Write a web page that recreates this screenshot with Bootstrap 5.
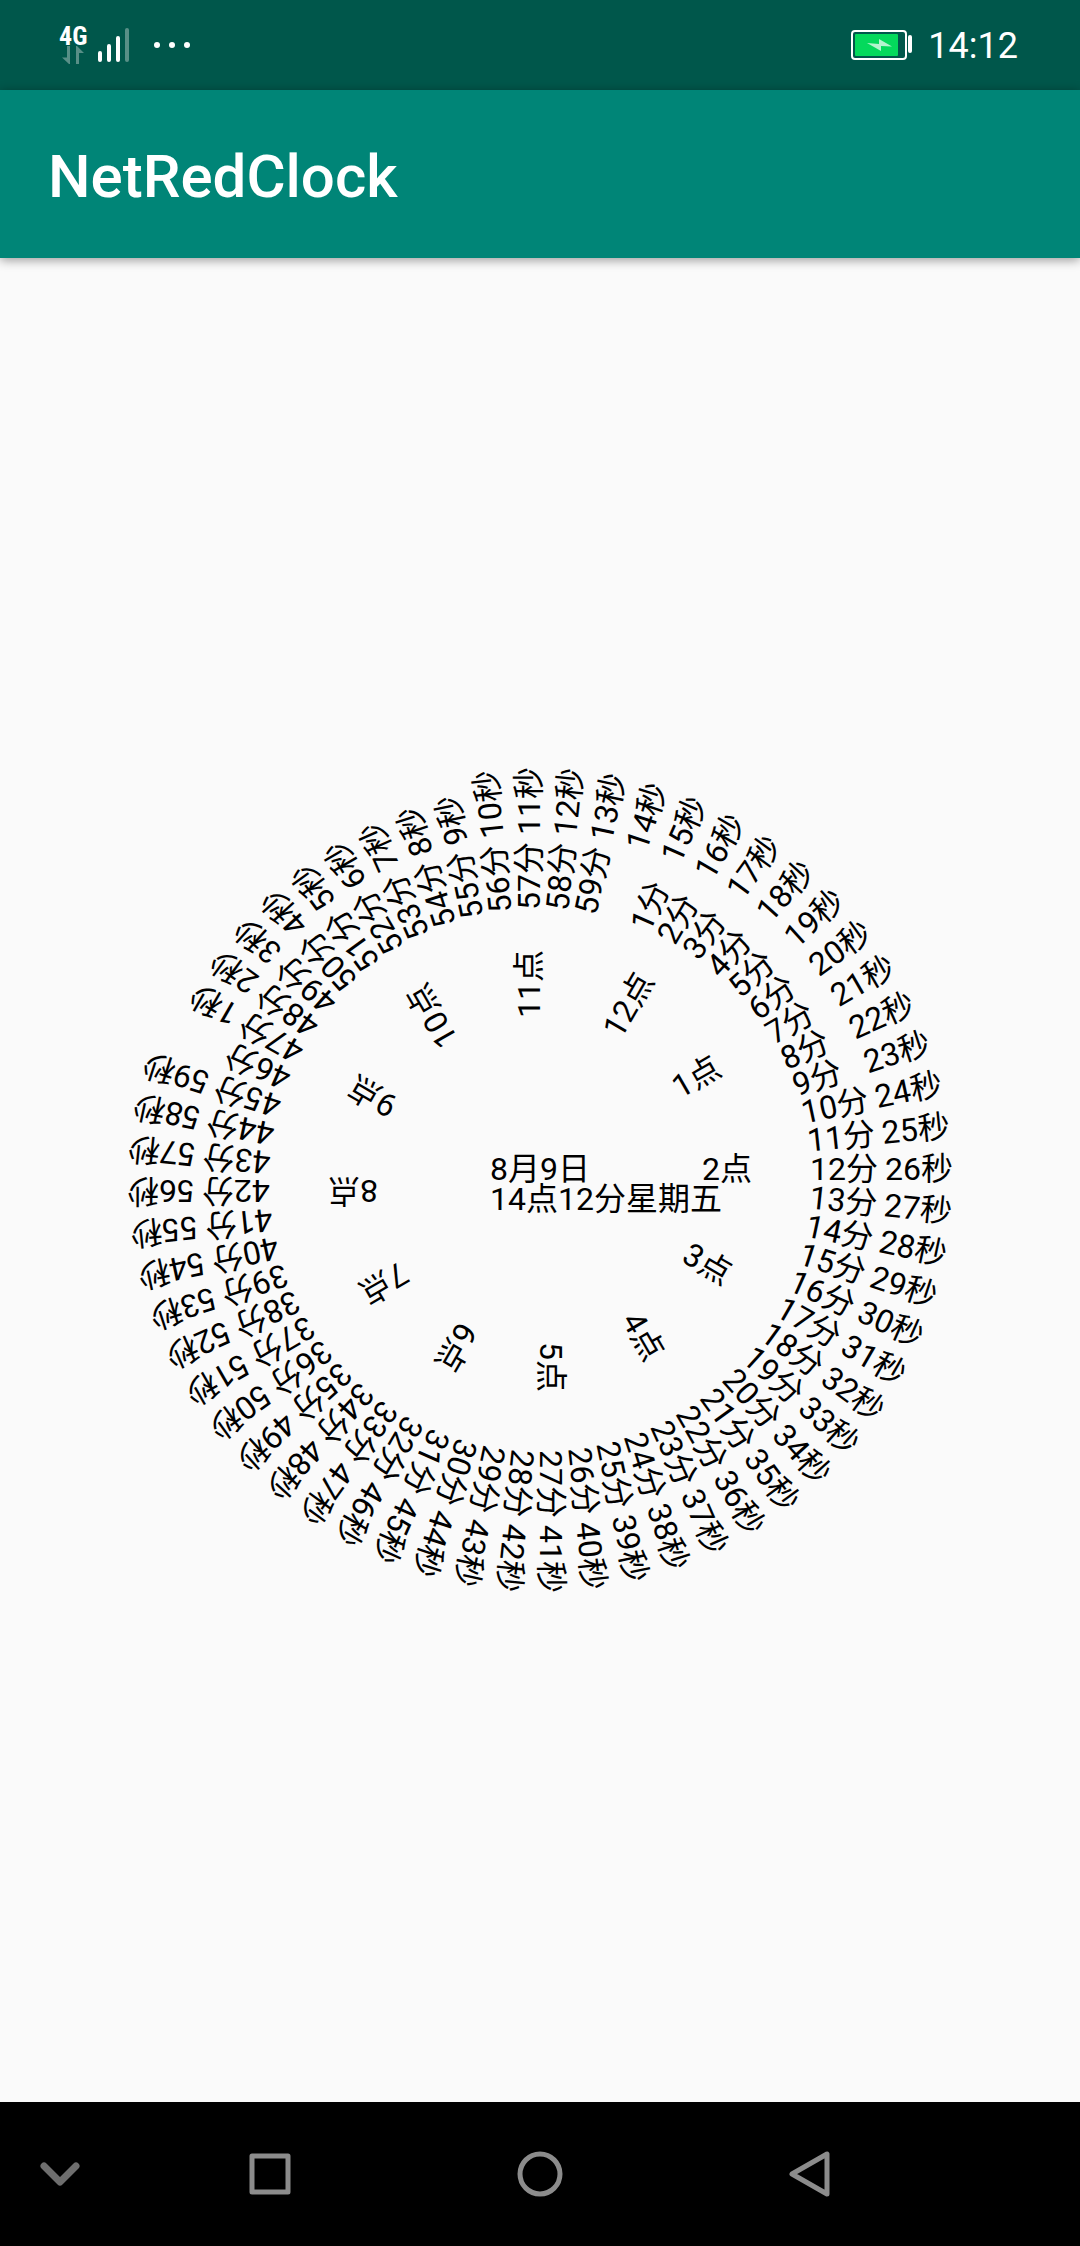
<!DOCTYPE html>
<html lang="zh-CN">
<head>
<meta charset="utf-8">
<meta name="viewport" content="width=device-width, initial-scale=1">
<title>NetRedClock</title>
<link href="https://cdn.jsdelivr.net/npm/bootstrap@5.3.0/dist/css/bootstrap.min.css" rel="stylesheet">
<style>
  body { font-family: Roboto, "Noto Sans CJK SC", sans-serif; background: #fafafa; color: #000; }
  .status-strip { height: 90px; background: #00574b; padding: 0 62px 0 59px; }
  .net-type { font-family: "Roboto Condensed", Roboto, sans-serif; font-size: 26px; font-weight: 700; line-height: 20px; }
  .status-time { font-size: 36px; line-height: 42px; padding-top: 2px; }
  .app-bar { height: 168px; background: #008577; padding: 6px 48px 0; box-shadow: 0 2px 10px rgba(0, 0, 0, .4); }
  .app-title { font-size: 60px; font-weight: 500; line-height: 70px; }
  .dial { width: 100%; max-width: 840px; aspect-ratio: 1; font-size: 32px; line-height: 30px; white-space: nowrap; }
  .dial-hub { position: absolute; left: 50%; top: 50%; }
  /* every label turns about the hub on its own text baseline */
  .tick-label, .hub-text { position: absolute; top: -26px; left: 0; }
  .tick-label { transform-origin: 0 26px; transform: rotate(var(--turn)) translateX(var(--reach)); }
  .hub-text { left: -50px; }
  .ring-hour { --reach: 162px; }
  .ring-minute { --reach: 270px; }
  .ring-second { --reach: 345px; }
  .nav-strip { height: 144px; background: #000; }
  .nav-strip button { height: 144px; }
  .nav-hide { width: 120px; }
  .nav-keys { padding-right: 135px; padding-left: 15px; }
</style>
<script src="https://cdn.jsdelivr.net/npm/bootstrap@5.3.0/dist/js/bootstrap.bundle.min.js"></script>
</head>
<body class="d-flex flex-column min-vh-100 overflow-x-hidden">
  <div class="status-strip d-flex align-items-center justify-content-between text-white">
    <div class="d-flex align-items-center">
      <div class="d-flex flex-column">
        <span class="net-type">4G</span>
        <svg width="28" height="18" viewBox="0 0 28 18" fill="#588f87" aria-hidden="true"><path d="M8 0h3v18h-1L3 11.500h5zM17 18V0h1l7 7h-5v11z"/></svg>
      </div>
      <svg class="ms-2" width="34" height="36" viewBox="0 0 34 36" aria-hidden="true">
        <g stroke="#fff" stroke-width="4" stroke-linecap="round"><path d="M5 26v7M14 19v14M23 11v22"/><path stroke="#588f87" d="M32 3v30"/></g>
      </svg>
      <svg class="ms-4" width="38" height="8" viewBox="0 0 38 8" fill="#fff" aria-hidden="true"><circle cx="4" cy="4" r="3"/><circle cx="19" cy="4" r="3"/><circle cx="34" cy="4" r="3"/></svg>
    </div>
    <div class="d-flex align-items-center gap-3">
      <svg width="61" height="30" viewBox="0 0 61 30" aria-hidden="true">
        <rect x="1" y="1" width="54" height="28" rx="3" fill="none" stroke="#fff" stroke-width="2"/>
        <rect x="4" y="4" width="43" height="22" rx="1" fill="#04d95c"/>
        <path d="M16 13l12 1V9l13 7.500-11-.5v5z" fill="#b4f4cf"/>
        <rect x="57" y="5" width="4" height="18" rx="2" fill="#fff"/>
      </svg>
      <span class="status-time">14:12</span>
    </div>
  </div>

  <header class="app-bar d-flex align-items-center text-white">
    <h1 class="app-title m-0">NetRedClock</h1>
  </header>

  <main class="flex-grow-1 d-flex align-items-center justify-content-center">
    <div class="dial position-relative">
      <div class="dial-hub" id="hub">
        <div class="hub-text">8月9日<br>14点12分星期五</div>
      </div>
    </div>
  </main>

  <nav class="nav-strip d-flex" aria-label="系统导航">
    <button type="button" class="nav-hide btn border-0 rounded-0 p-0" aria-label="隐藏导航栏">
      <svg width="42" height="28" viewBox="0 0 42 28" fill="none" stroke="#6e6e6e" stroke-width="7" stroke-linecap="round" stroke-linejoin="round"><path d="M5 6l16 16L37 6"/><path d="M17 15l4 3 4-3-4 7z" fill="#6e6e6e" stroke="none"/></svg>
    </button>
    <div class="nav-keys d-flex flex-grow-1">
      <button type="button" class="btn border-0 rounded-0 p-0 flex-fill" aria-label="最近任务">
        <svg width="48" height="48" viewBox="0 0 48 48" fill="none" stroke="#8c8c8c" stroke-width="5" stroke-linejoin="round"><path d="M6 6h36v36H6z"/></svg>
      </button>
      <button type="button" class="btn border-0 rounded-0 p-0 flex-fill" aria-label="主屏幕">
        <svg width="48" height="48" viewBox="0 0 48 48" fill="none" stroke="#8c8c8c" stroke-width="5"><circle cx="24" cy="24" r="20"/></svg>
      </button>
      <button type="button" class="btn border-0 rounded-0 p-0 flex-fill" aria-label="返回">
        <svg width="48" height="48" viewBox="0 0 48 48" fill="none" stroke="#8c8c8c" stroke-width="5" stroke-linejoin="round"><path d="M41 4v40L6 24z"/></svg>
      </button>
    </div>
  </nav>

<script>
  // current is the value that lies level, to the right of the hub
  const rings = [
    { name: 'hour', unit: '点', last: 12, step: 30, current: 2 },
    { name: 'minute', unit: '分', last: 59, step: 6, current: 12 },
    { name: 'second', unit: '秒', last: 59, step: 6, current: 26 }
  ];
  const hub = document.getElementById('hub');
  for (const ring of rings) {
    for (let n = 1; n <= ring.last; n++) {
      const label = document.createElement('span');
      label.className = 'tick-label ring-' + ring.name;
      label.style.setProperty('--turn', (n - ring.current) * ring.step + 'deg');
      label.textContent = n + ring.unit;
      hub.append(label);
    }
  }
</script>
</body>
</html>
